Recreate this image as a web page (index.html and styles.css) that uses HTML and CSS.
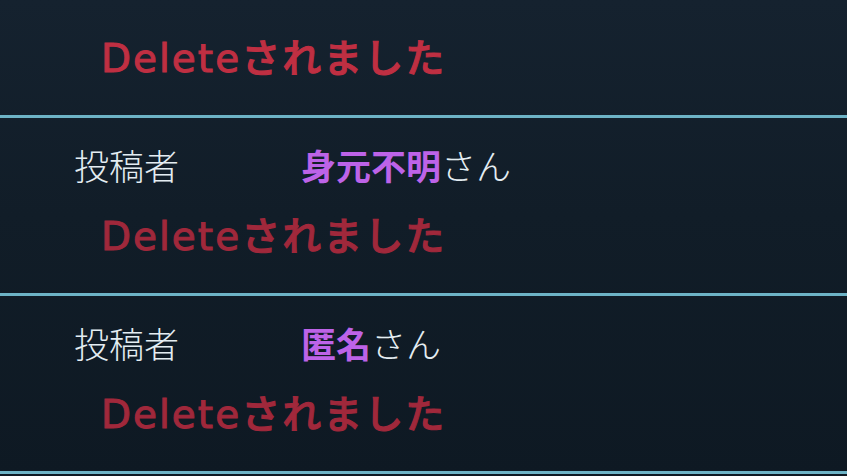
FILE: index.html
```html
<!DOCTYPE html>
<html lang="ja">
<head>
    <meta charset="UTF-8">
    <meta name="viewport" content="width=device-width, initial-scale=1.0">
    <title>投稿一覧</title>
    <link rel="stylesheet" href="styles.css">
</head>
<body>
    <div class="post-list">
        <!-- partially scrolled-off post -->
        <div class="post">
            <div class="post-meta first">
                <span class="meta-label">投稿者</span>
            </div>
            <p class="post-body">Deleteされました</p>
        </div>

        <div class="post">
            <div class="post-meta">
                <span class="meta-label">投稿者</span>
                <span class="author"><b class="author-name">身元不明</b>さん</span>
            </div>
            <p class="post-body dim">Deleteされました</p>
        </div>

        <div class="post">
            <div class="post-meta">
                <span class="meta-label">投稿者</span>
                <span class="author"><b class="author-name">匿名</b>さん</span>
            </div>
            <p class="post-body dim">Deleteされました</p>
        </div>
    </div>
</body>
</html>
```

FILE: styles.css
```css
body {
    margin: 0;
    padding: 0;
    height: 476px;
    overflow: hidden;
    font-family: "Noto Sans CJK JP", "Noto Sans", sans-serif;
    background-color: #0f1b26;
    background-image: linear-gradient(180deg, #15222f 0%, #111d28 45%, #0e1923 100%);
}

.post-list {
    margin-top: -60px; /* first post is scrolled up out of view */
}

.post {
    height: 175px;
    padding: 0 0 0 74px;
    border-bottom: 3px solid #6db3c6;
    box-sizing: content-box;
    display: flex;
    flex-direction: column;
}

.post-meta {
    display: flex;
    align-items: center;
    height: 40px;
    margin-top: 26px;
    font-size: 35px;
    color: #e4edf2;
    font-weight: 300;
}

.post-meta.first {
    margin-top: 20px;
    margin-bottom: 6px;
}

.meta-label {
    width: 227px;
}

.author-name {
    color: #bd63e8;
    font-weight: 700;
}

.post-body {
    margin: 31px 0 0 27px;
    height: 44px;
    line-height: 44px;
    font-family: "DejaVu Sans", "Noto Sans CJK JP", sans-serif;
    font-size: 39px;
    font-weight: 500;
    letter-spacing: 2px;
    color: #bf2f42;
    -webkit-text-stroke: 1px currentColor;
}

.post-body.dim {
    color: #a0283b;
}
```
